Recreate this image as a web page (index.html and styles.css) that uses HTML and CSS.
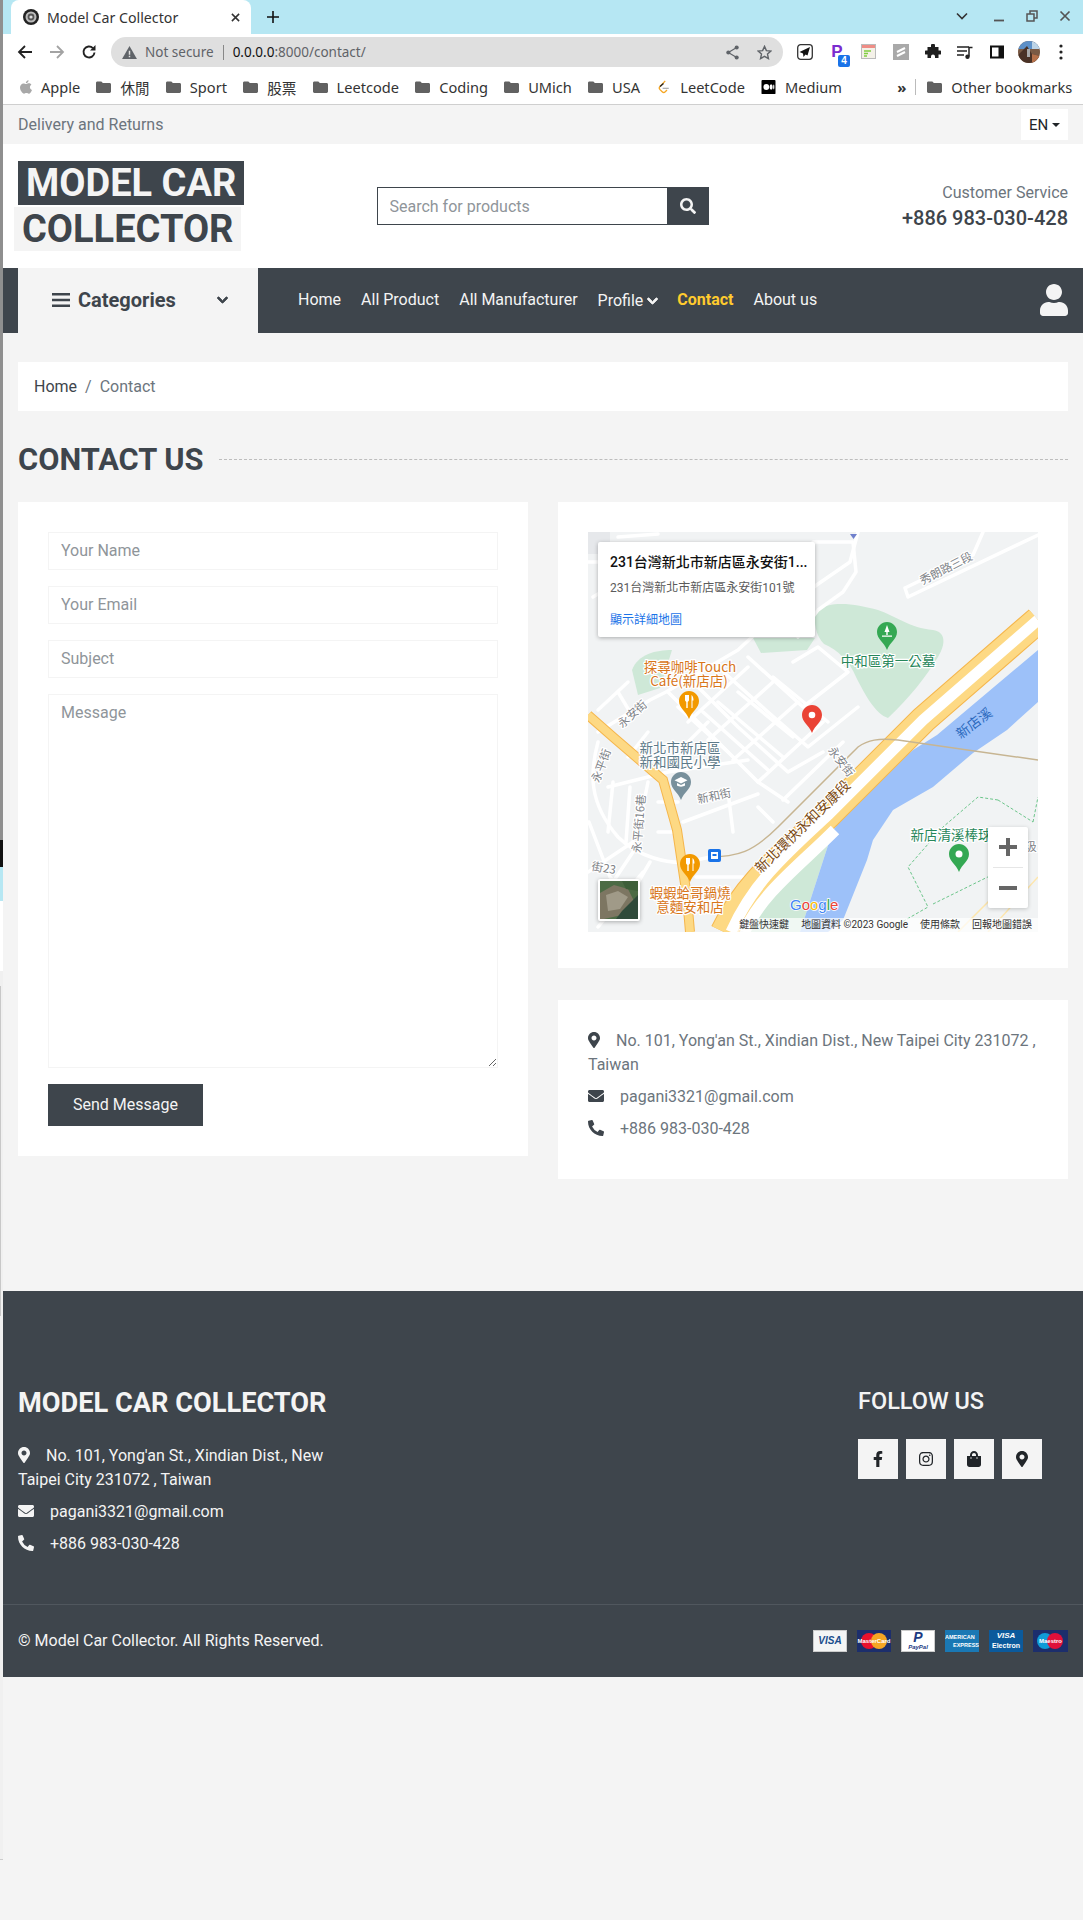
FILE: index.html
```html
<!DOCTYPE html>
<html lang="en">
<head>
<meta charset="utf-8">
<title>Model Car Collector</title>
<link rel="stylesheet" href="styles.css">
</head>
<body>
<svg class="defs" width="0" height="0" aria-hidden="true">
  <symbol id="i-marker" viewBox="0 0 384 512"><path d="M172.268 501.67C26.97 291.031 0 255.457 0 192 0 85.961 85.961 0 192 0s192 85.961 192 192c0 63.457-26.97 99.031-172.268 309.67-9.535 13.774-29.93 13.773-39.464 0zM192 272c44.183 0 80-35.817 80-80s-35.817-80-80-80-80 35.817-80 80 35.817 80 80 80z"/></symbol>
  <symbol id="i-mail" viewBox="0 0 512 512"><path d="M502.3 190.8c3.9-3.1 9.7-.2 9.7 4.7V400c0 26.5-21.5 48-48 48H48c-26.5 0-48-21.5-48-48V195.6c0-5 5.7-7.8 9.7-4.7 22.4 17.4 52.1 39.5 154.1 113.6 21.1 15.4 56.7 47.8 92.2 47.6 35.7.3 72-32.8 92.3-47.6 102-74.1 131.6-96.3 154-113.7zM256 320c23.2.4 56.6-29.2 73.4-41.4 132.7-96.3 142.8-104.7 173.4-128.7 5.8-4.5 9.2-11.5 9.2-18.9v-19c0-26.5-21.5-48-48-48H48C21.5 64 0 85.5 0 112v19c0 7.4 3.4 14.3 9.2 18.9 30.6 23.9 40.7 32.4 173.4 128.7 16.8 12.2 50.2 41.8 73.4 41.4z"/></symbol>
  <symbol id="i-phone" viewBox="0 0 512 512"><path d="M497.39 361.8l-112-48a24 24 0 0 0-28 6.9l-49.6 60.6A370.66 370.66 0 0 1 130.6 204.11l60.6-49.6a23.94 23.94 0 0 0 6.9-28l-48-112A24.16 24.16 0 0 0 122.6.61l-104 24A24 24 0 0 0 0 48c0 256.5 207.9 464 464 464a24 24 0 0 0 23.4-18.6l24-104a24.29 24.29 0 0 0-14.01-27.6z"/></symbol>
  <symbol id="i-search" viewBox="0 0 512 512"><path d="M505 442.7L405.3 343c-4.5-4.5-10.6-7-17-7H372c27.6-35.3 44-79.7 44-128C416 93.1 322.9 0 208 0S0 93.1 0 208s93.1 208 208 208c48.3 0 92.7-16.4 128-44v16.3c0 6.4 2.5 12.5 7 17l99.7 99.7c9.4 9.4 24.6 9.4 33.9 0l28.3-28.3c9.4-9.4 9.4-24.6.1-34zM208 336c-70.7 0-128-57.2-128-128 0-70.7 57.2-128 128-128 70.7 0 128 57.2 128 128 0 70.7-57.2 128-128 128z"/></symbol>
  <symbol id="i-chev" viewBox="0 0 448 512"><path d="M207.029 381.476L12.686 187.132c-9.373-9.373-9.373-24.569 0-33.941l22.667-22.667c9.357-9.357 24.522-9.375 33.901-.04L224 284.505l154.745-154.021c9.379-9.335 24.544-9.317 33.901.04l22.667 22.667c9.373 9.373 9.373 24.569 0 33.941L240.971 381.476c-9.373 9.372-24.569 9.372-33.942 0z"/></symbol>
  <symbol id="i-folder" viewBox="0 0 16 14"><path d="M1.5 1h4.2l1.6 1.7h7.2c.8 0 1.5.7 1.5 1.5v7.6c0 .8-.7 1.5-1.5 1.5h-13C.7 13.3 0 12.6 0 11.8V2.5C0 1.7.7 1 1.5 1z"/></symbol>
</svg>
<div class="screen">
  <div class="edge">
    <div class="edge-a"></div><div class="edge-b"></div><div class="edge-c"></div><div class="edge-d"></div><div class="edge-e"></div><div class="edge-f"></div><div class="edge-g"></div><div class="edge-h"></div><div class="edge-i"></div>
  </div>
  <div class="main">
    <div class="browser">
      <div class="tabstrip">
        <div class="tab">
          <svg class="favicon" viewBox="0 0 16 16"><circle cx="8" cy="8" r="8" fill="#222"/><circle cx="8" cy="8" r="5.5" fill="#bbb"/><circle cx="8" cy="8" r="3.4" fill="#555"/><circle cx="8" cy="8" r="1.6" fill="#ddd"/></svg>
          <span class="tab-title">Model Car Collector</span>
          <svg class="tab-x" viewBox="0 0 10 10"><path d="M1 1l8 8M9 1L1 9" stroke="#333" stroke-width="1.7" fill="none"/></svg>
        </div>
        <svg class="tab-plus" viewBox="0 0 12 12"><path d="M6 0v12M0 6h12" stroke="#111" stroke-width="1.6" fill="none"/></svg>
        <div class="win-controls">
          <svg class="win win-chev" viewBox="0 0 12 12"><path d="M1 3.5l5 5 5-5" stroke="#333" stroke-width="1.6" fill="none"/></svg>
          <svg class="win" viewBox="0 0 12 12"><path d="M1 10.5h10" stroke="#555" stroke-width="1.8" fill="none"/></svg>
          <svg class="win" viewBox="0 0 12 12"><path d="M1 4h7v7H1zM4 3.5V1h7v7H8.5" stroke="#555" stroke-width="1.5" fill="none"/></svg>
          <svg class="win" viewBox="0 0 12 12"><path d="M1.5 1.5l9 9M10.5 1.5l-9 9" stroke="#555" stroke-width="1.7" fill="none"/></svg>
        </div>
      </div>
      <div class="toolbar">
        <svg class="tb" viewBox="0 0 16 16"><path d="M15 8H2M8 2L2 8l6 6" stroke="#222" stroke-width="1.8" fill="none"/></svg>
        <svg class="tb" viewBox="0 0 16 16"><path d="M1 8h13M8 2l6 6-6 6" stroke="#a3a3a3" stroke-width="1.8" fill="none"/></svg>
        <svg class="tb" viewBox="0 0 16 16"><path d="M13.5 8.5a5.5 5.5 0 1 1-1.6-4.4" stroke="#222" stroke-width="1.9" fill="none"/><path d="M14.5 1v5.5H9z" fill="#222"/></svg>
        <div class="omnibox">
          <svg class="warn" viewBox="0 0 16 14"><path d="M8 0l8 14H0z" fill="#5f6368"/><path d="M7.2 5h1.6v4.5H7.2zM7.2 10.5h1.6V12H7.2z" fill="#dfdfdf"/></svg>
          <span class="not-secure">Not secure</span>
          <span class="omni-sep"></span>
          <span class="url"><b class="url-host">0.0.0.0</b>:8000/contact/</span>
          <svg class="omni-share" viewBox="0 0 14 16"><circle cx="2.5" cy="8" r="2.2" fill="#5f6368"/><circle cx="11.5" cy="2.7" r="2.2" fill="#5f6368"/><circle cx="11.5" cy="13.3" r="2.2" fill="#5f6368"/><path d="M2.5 8l9-5.3M2.5 8l9 5.3" stroke="#5f6368" stroke-width="1.3"/></svg>
          <svg class="omni-star" viewBox="0 0 16 16"><path d="M8 1.5l2 4.5 4.8.5-3.6 3.2 1 4.8L8 12.1l-4.2 2.4 1-4.8L1.2 6.5l4.8-.5z" stroke="#5f6368" stroke-width="1.5" fill="none"/></svg>
        </div>
        <div class="exts">
          <svg class="ext" viewBox="0 0 16 16"><rect x=".7" y=".7" width="14.6" height="14.6" rx="3" fill="#fff" stroke="#333" stroke-width="1.3"/><path d="M13 3L2.5 8 6 9.5 6.5 13l2-2.500 2 1z" fill="#111"/></svg>
          <span class="ext ext-p">P<span class="ext-badge">4</span></span>
          <svg class="ext" viewBox="0 0 16 16"><rect x=".5" y=".5" width="14" height="14" fill="#f4f1e8" stroke="#bbb"/><rect x="1" y="1" width="13" height="3" fill="#ef8d86"/><path d="M3 7h7M3 9.5h4M3 12h3" stroke="#7fce3f" stroke-width="1.3"/></svg>
          <svg class="ext" viewBox="0 0 16 16"><rect width="16" height="16" fill="#a9a9a9"/><path d="M4 8l8-4M4 12l8-4" stroke="#fff" stroke-width="2" fill="none"/></svg>
          <svg class="ext" viewBox="0 0 16 16"><path d="M6 1.5a2 2 0 0 1 4 0V3h3.500v3.500H15a2 2 0 0 1 0 4h-1.500V14H10v-1.500a2 2 0 0 0-4 0V14H2.500v-3.500H1a2 2 0 0 1 0-4h1.500V3H6z" fill="#1f1f1f"/></svg>
          <svg class="ext" viewBox="0 0 16 16"><path d="M0 3h12M0 7h10M0 11h7" stroke="#222" stroke-width="1.5" fill="none"/><path d="M12 12.500V3.500h3.500" stroke="#222" stroke-width="1.5" fill="none"/><circle cx="10.500" cy="12.800" r="2.200" fill="#222"/></svg>
          <svg class="ext" viewBox="0 0 16 16"><rect x="1" y="1.500" width="14" height="13" fill="#111"/><rect x="3" y="3.500" width="6.500" height="9" fill="#fff"/></svg>
          <svg class="ext ext-ava" viewBox="0 0 22 22"><defs><clipPath id="ava"><circle cx="11" cy="11" r="11"/></clipPath></defs><g clip-path="url(#ava)"><rect width="22" height="22" fill="#7a5a44"/><rect width="22" height="8" fill="#5d90c8"/><path d="M14 0l8 4v4h-8z" fill="#bcd3e6"/><path d="M0 14l9-9 5 8 8 2v7H0z" fill="#4a3226"/><path d="M14 13l8 2v7h-8z" fill="#b5714a"/><path d="M9 8h3v8H9z" fill="#a9a9a9"/></g></svg>
          <svg class="ext ext-dots" viewBox="0 0 4 16"><circle cx="2" cy="2" r="1.600" fill="#222"/><circle cx="2" cy="8" r="1.600" fill="#222"/><circle cx="2" cy="14" r="1.600" fill="#222"/></svg>
        </div>
      </div>
      <div class="bookmarks">
        <a class="bm"><svg class="bm-i bm-apple" viewBox="0 0 14 16"><path d="M10 0c.2 1.800-1.500 3.600-3.200 3.500C6.600 1.800 8.300.2 10 0zM7 4.600c.8 0 1.800-.9 3.300-.9 1.100 0 2.200.5 3 1.600-2.600 1.500-2.100 5.100.7 6.100-.7 1.900-2.200 4.400-3.700 4.400-1 0-1.500-.7-2.800-.7s-1.800.7-2.800.7C2.900 15.800 0 12 0 8.700c0-3 2-4.900 4-4.900 1.300 0 2.200.8 3 .8z" fill="#a8a8a8"/></svg>Apple</a>
        <a class="bm"><svg class="bm-i"><use href="#i-folder"/></svg>休閒</a>
        <a class="bm"><svg class="bm-i"><use href="#i-folder"/></svg>Sport</a>
        <a class="bm"><svg class="bm-i"><use href="#i-folder"/></svg>股票</a>
        <a class="bm"><svg class="bm-i"><use href="#i-folder"/></svg>Leetcode</a>
        <a class="bm"><svg class="bm-i"><use href="#i-folder"/></svg>Coding</a>
        <a class="bm"><svg class="bm-i"><use href="#i-folder"/></svg>UMich</a>
        <a class="bm"><svg class="bm-i"><use href="#i-folder"/></svg>USA</a>
        <a class="bm"><svg class="bm-i" viewBox="0 0 14 16"><path d="M9 1L3 7.500a2.500 2.500 0 0 0 0 3.500l2.500 2.500a2.500 2.500 0 0 0 3.500 0l2-2" stroke="#f5a623" stroke-width="1.500" fill="none"/><path d="M3 7.500L7 4" stroke="#222" stroke-width="1.500"/><path d="M6 9.500h7" stroke="#aaa" stroke-width="1.400"/></svg>LeetCode</a>
        <a class="bm bm-med"><svg class="bm-i" viewBox="0 0 16 16"><rect width="16" height="16" rx="1" fill="#000"/><circle cx="5.500" cy="8" r="3.300" fill="#fff"/><ellipse cx="11" cy="8" rx="1.700" ry="3.100" fill="#fff"/><ellipse cx="14" cy="8" rx=".7" ry="2.800" fill="#fff"/></svg>Medium</a>
        <span class="bm-more">»</span>
        <span class="bm-sep"></span>
        <a class="bm bm-other"><svg class="bm-i"><use href="#i-folder"/></svg>Other bookmarks</a>
      </div>
    </div>

    <div class="topbar">
      <span class="delivery">Delivery and Returns</span>
      <span class="lang">EN<i class="caret"></i></span>
    </div>

    <header class="header">
      <div class="logo">
        <span class="logo-a">MODEL CAR</span>
        <span class="logo-b">COLLECTOR</span>
      </div>
      <form class="search">
        <input class="search-input" type="text" placeholder="Search for products">
        <span class="search-btn"><svg class="ico-search"><use href="#i-search"/></svg></span>
      </form>
      <div class="service">
        <div class="service-label">Customer Service</div>
        <div class="service-phone">+886 983-030-428</div>
      </div>
    </header>

    <nav class="nav">
      <div class="cats">
        <svg class="cats-bars" viewBox="0 0 18 14"><path d="M0 1.300h18M0 7h18M0 12.700h18" stroke="#3e454c" stroke-width="2.600"/></svg>
        <span class="cats-label">Categories</span>
        <svg class="cats-chev"><use href="#i-chev"/></svg>
      </div>
      <div class="menu">
        <a class="menu-item">Home</a>
        <a class="menu-item">All Product</a>
        <a class="menu-item">All Manufacturer</a>
        <a class="menu-item menu-profile">Profile <svg class="menu-chev"><use href="#i-chev"/></svg></a>
        <a class="menu-item menu-active">Contact</a>
        <a class="menu-item">About us</a>
      </div>
      <svg class="user" viewBox="0 0 448 512"><path d="M224 256c70.700 0 128-57.300 128-128S294.700 0 224 0 96 57.300 96 128s57.300 128 128 128zm89.600 32h-16.700c-22.200 10.200-46.900 16-72.900 16s-50.600-5.800-72.900-16h-16.700C60.200 288 0 348.200 0 422.400V464c0 26.500 21.500 48 48 48h352c26.500 0 48-21.500 48-48v-41.600c0-74.200-60.200-134.400-134.400-134.400z"/></svg>
    </nav>

    <main class="content">
      <div class="crumbs"><a class="crumb-home">Home</a><span class="crumb-sep">/</span><span class="crumb-cur">Contact</span></div>
      <div class="title-row"><h1 class="title">CONTACT US</h1><span class="title-line"></span></div>
      <div class="columns">
        <form class="card form-card">
          <input class="field" type="text" placeholder="Your Name">
          <input class="field" type="email" placeholder="Your Email">
          <input class="field" type="text" placeholder="Subject">
          <textarea class="field field-msg" placeholder="Message"></textarea>
          <button class="send" type="button">Send Message</button>
        </form>
        <div class="col-right">
          <div class="card map-card">
            <div class="map">
              <svg class="map-svg" viewBox="0 0 450 400" width="450" height="400">
                <rect width="450" height="400" fill="#f1f3f4"/>
                <rect width="22" height="22" fill="#e6e8eb"/>
                <!-- parks -->
                <path d="M228 78C245 68 268 72 290 78 308 84 322 96 345 98 358 100 358 112 350 125 338 145 322 165 300 186 288 182 278 165 268 145 262 130 250 118 236 112 228 104 225 90 228 78z" fill="#cee8d7"/>
                <path d="M165 106h62l-8 12-46 3z" fill="#cee8d7"/>
                <path d="M44 138C50 122 68 118 84 118L72 156 50 163z" fill="#cee8d7"/>
                <path d="M245 298L212 400H162C176 360 205 335 245 298z" fill="#cee8d7"/>
                <path d="M350 205L450 122V140L425 165 380 200z" fill="#cee8d7"/>
                <!-- river -->
                <path d="M450 118L349 203 325 218 285 251 245 298 212 400H240L255 388 279 328 285 308 305 278 345 255 385 221 419 198 450 170z" fill="#9dc1f9"/>
                <!-- minor roads -->
                <g class="roads">
                  <path d="M10 200L62 168 78 160 150 118 178 92 195 78 230 52 262 30 270 0"/>
                  <path d="M225 10H265L268 40 255 60 230 78 210 105"/>
                  <path d="M80 160L125 205 170 250 200 270"/>
                  <path d="M105 150L150 195 200 240 235 220"/>
                  <path d="M130 135L180 180 220 215 270 175"/>
                  <path d="M160 125L215 175 260 140 230 115 205 130"/>
                  <path d="M100 190L160 135M120 208L185 150M145 228L210 170M170 250L235 190M195 268L255 210"/>
                  <path d="M130 170L195 225M115 180L180 238M150 160L205 205M185 145L240 190M90 175L140 220"/>
                  <path d="M85 225L120 190M20 255L80 240 160 228M10 210C2 240 0 270 30 305 50 325 80 332 100 330L122 325"/>
                  <path d="M25 250L20 300M42 255L38 310M60 250L50 300M70 270H90M70 300H85"/>
                  <path d="M95 290L170 262M0 340L45 310M15 365L45 320M30 385L62 330M10 395L55 340"/>
                  <path d="M108 345H155M140 260L145 300M170 275L185 290"/>
                  <path d="M0 30H15L30 50 5 65M30 5L70 2M317 56L385 23 395 0M317 56L320 65 450 3"/>
                  <path d="M10 178L40 150M30 160L45 185M60 200L40 225"/>
                  <path d="M1 290L22 345 38 362"/>
                </g>
                <!-- highway left -->
                <path d="M0 183L25 205 75 248 89 298 99 365 102 400" class="hw-edge" stroke-width="10"/>
                <path d="M0 183L25 205 75 248 89 298 99 365 102 400" class="hw-fill" stroke-width="8"/>
                <!-- main highway -->
                <path d="M450 88L335 188 240 283C195 325 160 350 136 400" class="hw-edge" stroke-width="28"/>
                <path d="M450 88L335 188 240 283C195 325 160 350 136 400" class="hw-fill" stroke-width="26"/>
                <path d="M450 88L335 188 240 283C200 320 165 350 143 400" class="hw-white" stroke-width="11"/>
                <path d="M247 298C210 335 175 360 156 400" class="hw-white" stroke-width="12"/>
                <path d="M120 325C150 325 165 320 190 295L270 215C280 208 290 206 310 208L450 228" class="trail"/>
                <path d="M410 268L390 265 355 295 320 335 340 375 300 398M410 268L445 290M445 290L450 265M345 372L420 335" class="green-dash"/>
                <path d="M400 400L450 345M370 400L410 360" class="yellow-thin"/>
                <!-- road labels -->
                <text class="lbl-road" transform="translate(360 40) rotate(-27)">秀朗路三段</text>
                <text class="lbl-road" transform="translate(47 185) rotate(-42)">永安街</text>
                <text class="lbl-road" transform="translate(17 235) rotate(-70)">永平街</text>
                <text class="lbl-road" transform="translate(250 232) rotate(52)">永安街</text>
                <text class="lbl-road" transform="translate(127 268) rotate(-12)">新和街</text>
                <text class="lbl-road" transform="translate(55 292) rotate(-85)">永平街16巷</text>
                <text class="lbl-road" transform="translate(15 340) rotate(10)">街23</text>
                <text class="lbl-hw" transform="translate(218 298) rotate(-44)">新北環快永和安康段</text>
                <text class="lbl-river" transform="translate(389 195) rotate(-37)">新店溪</text>
                <text class="lbl-green" x="300" y="134">中和區第一公墓</text>
                <text class="lbl-orange" x="102" y="140">探尋咖啡Touch</text>
                <text class="lbl-orange" x="101" y="154">Café(新店店)</text>
                <text class="lbl-school" x="92" y="221">新北市新店區</text>
                <text class="lbl-school" x="92" y="235">新和國民小學</text>
                <text class="lbl-orange" x="102" y="366">蝦蝦蛤哥鍋燒</text>
                <text class="lbl-orange" x="102" y="380">意麵安和店</text>
                <text class="lbl-green" x="363" y="308">新店清溪棒球</text>
                <text class="lbl-road" x="443" y="319">汲</text>
                <!-- pins -->
                <g transform="translate(214 173)"><path d="M10 0C4.500 0 0 4.500 0 10c0 7 7 10 10 18 3-8 10-11 10-18C20 4.500 15.500 0 10 0z" fill="#ea4335"/><circle cx="10" cy="10" r="3.300" fill="#fff"/></g>
                <g transform="translate(91 159)"><path d="M10 0C4.500 0 0 4.500 0 10c0 7 7 10 10 18 3-8 10-11 10-18C20 4.500 15.500 0 10 0z" fill="#f29900"/><path d="M6 4v5c0 1 1 1.500 1.300 2v6h1.400v-6c.3-.5 1.300-1 1.300-2V4M12.500 4c1.500 1 2 3 2 5.500h-1V17h-1z" fill="#fff"/></g>
                <g transform="translate(92 322)"><path d="M10 0C4.500 0 0 4.500 0 10c0 7 7 10 10 18 3-8 10-11 10-18C20 4.500 15.500 0 10 0z" fill="#f29900"/><path d="M6 4v5c0 1 1 1.500 1.300 2v6h1.400v-6c.3-.5 1.300-1 1.300-2V4M12.500 4c1.500 1 2 3 2 5.500h-1V17h-1z" fill="#fff"/></g>
                <g transform="translate(289 90)"><path d="M10 0C4.500 0 0 4.500 0 10c0 7 7 10 10 18 3-8 10-11 10-18C20 4.500 15.500 0 10 0z" fill="#34a853"/><path d="M10 3l2.500 7h-5zM9.300 10h1.400v3H9.300zM5 13.500h10v1.300H5z" fill="#fff"/></g>
                <g transform="translate(361 312)"><path d="M10 0C4.500 0 0 4.500 0 10c0 7 7 10 10 18 3-8 10-11 10-18C20 4.500 15.500 0 10 0z" fill="#34a853"/><circle cx="10" cy="10" r="3.500" fill="#fff"/></g>
                <g transform="translate(83 240)"><path d="M10 0C4.500 0 0 4.500 0 10c0 7 7 10 10 18 3-8 10-11 10-18C20 4.500 15.500 0 10 0z" fill="#78909c"/><path d="M10 5l6.500 3.300L10 11.500 3.500 8.300zM6 11v2.500c2 1.500 6 1.500 8 0V11l-4 2z" fill="#fff"/></g>
                <rect x="120" y="317" width="13" height="13" rx="2" fill="#1a73e8"/>
                <rect x="123" y="320" width="7" height="7" fill="#fff"/>
                <rect x="124.500" y="322" width="4" height="2" fill="#1a73e8"/>
                <path d="M262 2h7l-3.500 5z" fill="#6f80cc"/>
                <text class="google" x="202" y="378"><tspan fill="#4285f4">G</tspan><tspan fill="#ea4335">o</tspan><tspan fill="#fbbc05">o</tspan><tspan fill="#4285f4">g</tspan><tspan fill="#34a853">l</tspan><tspan fill="#ea4335">e</tspan></text>
              </svg>
              <div class="iw">
                <div class="iw-title">231台灣新北市新店區永安街1...</div>
                <div class="iw-addr">231台灣新北市新店區永安街101號</div>
                <div class="iw-link">顯示詳細地圖</div>
              </div>
              <div class="sat"><svg class="sat-img" viewBox="0 0 38 38"><rect width="38" height="38" fill="#4c6b45"/><path d="M0 12L14 4l14 4 6 12-12 14-18 4H0z" fill="#7d7662"/><path d="M6 14l12-4 10 6-8 12-12 2z" fill="#a09a88"/><path d="M38 14L22 30 16 38h22z" fill="#2f4a3a"/><path d="M22 0h16v10l-12-2z" fill="#3e5f3a"/></svg></div>
              <div class="zoomctl">
                <div class="zoom-btn"><svg class="zoom-i" viewBox="0 0 18 18"><path d="M9 0v18M0 9h18" stroke="#666" stroke-width="4"/></svg></div>
                <div class="zoom-sep"></div>
                <div class="zoom-btn"><svg class="zoom-i" viewBox="0 0 18 18"><path d="M0 9h18" stroke="#666" stroke-width="4"/></svg></div>
              </div>
              <div class="attrib"><span class="attrib-k">鍵盤快速鍵</span><span class="attrib-k">地圖資料 ©2023 Google</span><span class="attrib-k">使用條款</span><span class="attrib-k">回報地圖錯誤</span></div>
            </div>
          </div>
          <div class="card info-card">
            <p class="info-line"><svg class="ic ic-marker"><use href="#i-marker"/></svg>No. 101, Yong'an St., Xindian Dist., New Taipei City 231072 , Taiwan</p>
            <p class="info-line"><svg class="ic ic-wide"><use href="#i-mail"/></svg>pagani3321@gmail.com</p>
            <p class="info-line"><svg class="ic ic-wide"><use href="#i-phone"/></svg>+886 983-030-428</p>
          </div>
        </div>
      </div>
    </main>

    <footer class="footer">
      <div class="footer-top">
        <div class="f-about">
          <h2 class="f-title">MODEL CAR COLLECTOR</h2>
          <p class="info-line f-line"><svg class="ic ic-marker"><use href="#i-marker"/></svg>No. 101, Yong'an St., Xindian Dist., New Taipei City 231072 , Taiwan</p>
          <p class="info-line f-line"><svg class="ic ic-wide"><use href="#i-mail"/></svg>pagani3321@gmail.com</p>
          <p class="info-line f-line"><svg class="ic ic-wide"><use href="#i-phone"/></svg>+886 983-030-428</p>
        </div>
        <div class="f-follow">
          <h3 class="f-follow-title">FOLLOW US</h3>
          <div class="socials">
            <a class="social"><svg class="soc-i" viewBox="0 0 320 512"><path d="M279.14 288l14.22-92.66h-88.91v-60.13c0-25.35 12.42-50.06 52.24-50.06h40.42V6.26S260.43 0 225.36 0c-73.22 0-121.08 44.38-121.08 124.72v70.62H22.89V288h81.39v224h100.17V288z"/></svg></a>
            <a class="social"><svg class="soc-i" viewBox="0 0 448 512"><path d="M224.1 141c-63.6 0-114.9 51.3-114.9 114.9s51.3 114.9 114.9 114.9S339 319.5 339 255.9 287.7 141 224.1 141zm0 189.6c-41.1 0-74.7-33.5-74.7-74.7s33.5-74.7 74.7-74.7 74.7 33.5 74.7 74.7-33.6 74.7-74.7 74.7zm146.4-194.3c0 14.9-12 26.8-26.8 26.8-14.9 0-26.8-12-26.8-26.8s12-26.8 26.8-26.8 26.8 12 26.8 26.8zm76.1 27.2c-1.7-35.9-9.9-67.7-36.2-93.9-26.2-26.2-58-34.4-93.9-36.2-37-2.1-147.9-2.1-184.9 0-35.8 1.7-67.6 9.9-93.9 36.1s-34.4 58-36.2 93.9c-2.1 37-2.1 147.9 0 184.9 1.7 35.9 9.9 67.7 36.2 93.9s58 34.4 93.9 36.2c37 2.1 147.9 2.1 184.9 0 35.9-1.7 67.7-9.9 93.9-36.2 26.2-26.2 34.4-58 36.2-93.9 2.1-37 2.1-147.8 0-184.8zM398.8 388c-7.8 19.6-22.9 34.7-42.6 42.6-29.5 11.7-99.5 9-132.1 9s-102.7 2.6-132.1-9c-19.6-7.8-34.7-22.9-42.6-42.6-11.7-29.5-9-99.5-9-132.1s-2.6-102.7 9-132.1c7.8-19.6 22.9-34.7 42.6-42.6 29.5-11.7 99.5-9 132.1-9s102.7-2.6 132.1 9c19.6 7.8 34.7 22.9 42.6 42.6 11.7 29.5 9 99.5 9 132.1s2.7 102.7-9 132.1z"/></svg></a>
            <a class="social"><svg class="soc-i" viewBox="0 0 448 512"><path d="M352 160v-32C352 57.42 294.579 0 224 0 153.42 0 96 57.42 96 128v32H0v272c0 44.183 35.817 80 80 80h288c44.183 0 80-35.817 80-80V160h-96zm-192-32c0-35.29 28.71-64 64-64s64 28.71 64 64v32H160v-32zm160 120c-13.255 0-24-10.745-24-24s10.745-24 24-24 24 10.745 24 24-10.745 24-24 24zm-192 0c-13.255 0-24-10.745-24-24s10.745-24 24-24 24 10.745 24 24-10.745 24-24 24z"/></svg></a>
            <a class="social"><svg class="soc-i"><use href="#i-marker"/></svg></a>
          </div>
        </div>
      </div>
      <div class="footer-bottom">
        <span class="copyright">© Model Car Collector. All Rights Reserved.</span>
        <div class="pays">
          <span class="pay pay-visa">VISA</span>
          <span class="pay pay-mc"><i class="mc-a"></i><i class="mc-b"></i><em class="pay-over">MasterCard</em></span>
          <span class="pay pay-paypal"><b class="pp-p">P</b><em class="pp-t">PayPal</em></span>
          <span class="pay pay-amex"><em class="amex-a">AMERICAN</em><em class="amex-b">EXPRESS</em></span>
          <span class="pay pay-elec"><b class="el-a">VISA</b><em class="el-b">Electron</em></span>
          <span class="pay pay-mc pay-mae"><i class="mc-a"></i><i class="mc-b"></i><em class="pay-over">Maestro</em></span>
        </div>
      </div>
    </footer>
  </div>
</div>
</body>
</html>
```

FILE: styles.css
```css
* { box-sizing: border-box; }
html, body { margin: 0; padding: 0; }
body { width: 1083px; height: 1920px; overflow: hidden; background: #f4f4f4; font-family: Roboto, "Noto Sans CJK TC", sans-serif; font-size: 16px; color: #3e454c; }
.defs { position: absolute; }
.screen { display: flex; height: 1920px; }
.edge { width: 3px; flex: none; display: flex; flex-direction: column; }
.edge-a { height: 840px; background: #8f8f8f; }
.edge-b { height: 27px; background: #111; }
.edge-c { height: 34px; background: #b6e7f3; }
.edge-d { height: 70px; background: #fff; }
.edge-e { height: 15px; background: #f0f0f0; }
.edge-f { height: 330px; background: linear-gradient(90deg, #c8c8c8 1px, #f0f0f0 1px); }
.edge-g { height: 543px; background: #f0f0f0; }
.edge-h { height: 1px; background: #ccc; }
.edge-i { flex: 1; background: #f4f4f4; }
.main { width: 1080px; flex: none; display: flex; flex-direction: column; }

/* browser chrome */
.browser { font-family: "Noto Sans", "Noto Sans CJK TC", sans-serif; color: #333; height: 105px; background: #fff; border-bottom: 1px solid #cfcfcf; }
.tabstrip { height: 34px; background: #b6e7f3; display: flex; align-items: flex-end; padding-left: 8px; }
.tab { width: 240px; height: 34px; background: #fff; border-radius: 8px 8px 0 0; display: flex; align-items: center; padding: 0 11px 0 12px; }
.favicon { width: 16px; height: 16px; margin-right: 8px; flex: none; }
.tab-title { font-size: 14.2px; flex: 1; white-space: nowrap; }
.tab-x { width: 9px; height: 9px; }
.tab-plus { width: 12px; height: 12px; margin: 0 0 11px 16px; }
.win-controls { margin-left: auto; display: flex; gap: 21px; padding: 0 12px 12px 0; }
.win { width: 12px; height: 12px; }
.win-chev { margin-right: 4px; }
.toolbar { height: 36px; display: flex; align-items: center; padding-left: 14px; }
.tb { width: 16px; height: 16px; margin-right: 16px; flex: none; }
.omnibox { width: 672px; height: 30px; margin-left: -2px; background: #dfdfdf; border-radius: 15px; display: flex; align-items: center; padding-left: 11px; font-size: 13.5px; }
.warn { width: 15px; height: 13px; flex: none; margin-right: 8px; }
.not-secure { color: #5f6368; white-space: nowrap; }
.omni-sep { width: 1px; height: 15px; background: #888; margin: 0 9px; }
.url { color: #5f6368; }
.url-host { font-weight: 400; color: #111; }
.omni-share { width: 13px; height: 15px; margin-left: auto; }
.omni-star { width: 15px; height: 15px; margin: 0 11px 0 18px; }
.exts { display: flex; align-items: center; margin-left: 14px; gap: 16px; }
.ext { width: 16px; height: 16px; flex: none; display: block; position: relative; }
.ext-p { font: 700 17px/16px "Liberation Sans", sans-serif; color: #7a2ccf; text-align: center; }
.ext-badge { position: absolute; right: -5px; bottom: -7px; width: 12px; height: 12px; background: #1a73e8; color: #fff; font: 700 10px/12px "Liberation Sans", sans-serif; border-radius: 2px; }
.ext-ava { width: 22px; height: 22px; margin: 0 -3px; }
.ext-dots { width: 4px; margin-left: 6px; }
.bookmarks { height: 34px; display: flex; align-items: center; padding-left: 17px; font-size: 14.6px; }
.bm { display: flex; align-items: center; gap: 9px; margin-right: 16.2px; white-space: nowrap; }
.bm-i { width: 15px; height: 14px; fill: #616161; flex: none; }
.bm-apple { width: 12px; }
.bm-more { margin-left: 39px; font-size: 15px; font-weight: 700; }
.bm-sep { width: 1px; height: 16px; background: #bbb; margin: 0 11px 0 9px; }
.bm-other { margin: 0; }

/* top bar */
.topbar { height: 39px; padding: 4px 15px; display: flex; align-items: center; justify-content: space-between; }
.delivery { font-size: 16px; color: #6c757d; }
.lang { width: 47px; height: 31px; background: #fff; color: #212529; font-size: 15px; display: flex; align-items: center; justify-content: center; }
.caret { width: 0; height: 0; margin-left: 4px; border: 4px solid transparent; border-top-color: #212529; border-bottom: 0; }

/* header */
.header { height: 124px; background: #fff; padding: 0 15px; display: grid; grid-template-columns: 1fr 331px 1fr; align-items: center; }
.logo { display: flex; flex-direction: column; align-items: flex-start; font-size: 38px; font-weight: 700; line-height: 44px; margin-top: -1px; }
.logo-a { background: #3e454c; color: #f4f4f4; padding: 0 8px 0 8px; white-space: nowrap; }
.logo-b { background: #f4f4f4; color: #3e454c; padding: 0 8px; margin: 2px 0 0 -4px; white-space: nowrap; }
.search { display: flex; height: 38px; margin-left: -1px; }
.search-input { flex: 1; min-width: 0; border: 1px solid #3e454c; border-right: 0; padding: 0 12px; font: 16px Roboto, sans-serif; background: #fff; outline: 0; }
.search-input::placeholder { color: #8f959a; opacity: 1; }
.search-btn { width: 42px; background: #3e454c; display: flex; align-items: center; justify-content: center; }
.ico-search { width: 16px; height: 16px; fill: #f4f4f4; }
.service { text-align: right; justify-self: end; margin-top: 0; }
.service-label { font-size: 16px; color: #6c757d; line-height: 24px; }
.service-phone { font-size: 20px; font-weight: 500; color: #3e454c; line-height: 26px; white-space: nowrap; }

/* nav */
.nav { height: 65px; background: #3e454c; padding: 0 15px; display: flex; align-items: center; }
.cats { width: 240px; height: 65px; background: #f4f4f4; display: flex; align-items: center; padding: 0 0 2px 34px; flex: none; }
.cats-bars { width: 18px; height: 14px; margin-right: 8px; }
.cats-label { font-size: 20px; font-weight: 700; }
.cats-chev { width: 11px; height: 12px; margin-left: 41px; fill: #3e454c; stroke: #3e454c; stroke-width: 40; }
.menu { display: flex; margin-left: 30px; flex: 1; padding-bottom: 2px; }
.menu-item { color: #f4f4f4; font-size: 16px; padding: 0 10px; white-space: nowrap; display: flex; align-items: center; }
.menu-profile { white-space: pre; padding-top: 2px; padding-right: 9px; }
.menu-chev { width: 11px; height: 12px; fill: #f4f4f4; stroke: #f4f4f4; stroke-width: 40; }
.menu-active { color: #ffcb2e; font-weight: 700; }
.user { width: 28px; height: 32px; fill: #f4f4f4; margin-top: -2px; }

/* content */
.content { padding: 29px 15px 0; height: 958px; }
.crumbs { height: 49px; background: #fff; padding: 0 16px; display: flex; align-items: center; }
.crumb-home { color: #3e454c; }
.crumb-sep { color: #6c757d; margin: 0 8px; }
.crumb-cur { color: #6c757d; }
.title-row { height: 91px; display: flex; align-items: center; gap: 15px; padding-top: 5px; }
.title { margin: 0; font-size: 30.8px; font-weight: 700; color: #3e454c; white-space: nowrap; }
.title-line { flex: 1; border-top: 1px dashed #bdbdbd; }
.columns { display: flex; gap: 30px; align-items: flex-start; }
.card { background: #fff; padding: 30px; }
.form-card { width: 510px; display: flex; flex-direction: column; gap: 16px; }
.field { width: 450px; height: 38px; border: 1px solid #f4f4f4; background: #fff; padding: 0 12px 1px; font: 16px Roboto, sans-serif; color: #495057; outline: 0; }
.field::placeholder { color: #8f959a; opacity: 1; }
.field-msg { height: 374px; padding: 8px 12px; display: block; }
.send { width: 155px; height: 42px; padding: 0 0 2px; background: #3e454c; color: #f4f4f4; border: 0; font: 16px Roboto, sans-serif; }
.col-right { width: 510px; display: flex; flex-direction: column; gap: 32px; }
.map-card { padding-bottom: 36px; }
.map { position: relative; width: 450px; height: 400px; overflow: hidden; }
.map-svg { display: block; font-family: "Noto Sans CJK TC", sans-serif; }
.roads { fill: none; stroke: #fff; stroke-width: 3.5; stroke-linejoin: round; stroke-linecap: round; }
.hw-edge { fill: none; stroke: #f5b64c; }
.hw-fill { fill: none; stroke: #fdd984; }
.hw-white { fill: none; stroke: #fff; }
.trail { fill: none; stroke: #c7b592; stroke-width: 1.5; }
.green-dash { fill: none; stroke: #6cc58a; stroke-width: 1; stroke-dasharray: 3 2; }
.yellow-thin { fill: none; stroke: #fde6ad; stroke-width: 1.5; }
.lbl-road, .lbl-hw, .lbl-river, .lbl-green, .lbl-orange, .lbl-school { text-anchor: middle; paint-order: stroke; stroke: #fff; stroke-width: 2.5px; stroke-linejoin: round; }
.lbl-road { font-size: 11.5px; fill: #7f8489; }
.lbl-hw { font-size: 14px; fill: #7b4a12; stroke: #fff; }
.lbl-river { font-size: 13.5px; fill: #2b69bd; stroke: #9dc1f9; }
.lbl-green { font-size: 13.5px; fill: #27875a; }
.lbl-orange { font-size: 13.5px; fill: #d8761a; }
.lbl-school { font-size: 13.5px; fill: #5d7a89; }
.google { font-family: "Liberation Sans", sans-serif; font-size: 15px; paint-order: stroke; stroke: #fff; stroke-width: 1.5px; }
.iw { position: absolute; left: 10px; top: 10px; width: 217px; height: 95px; background: #fff; border-radius: 2px; box-shadow: 0 1px 4px rgba(0,0,0,.3); padding: 10px 6px 9px 12px; font-family: Roboto, "Noto Sans CJK TC", sans-serif; }
.iw-title { font-size: 14px; font-weight: 500; color: #111; line-height: 20px; white-space: nowrap; }
.iw-addr { font-size: 12px; color: #5b5b5b; line-height: 18px; margin-top: 7px; white-space: nowrap; }
.iw-link { font-size: 12px; color: #1a73e8; line-height: 18px; margin-top: 14px; }
.sat { position: absolute; left: 10px; top: 347px; width: 42px; height: 42px; background: #fff; border-radius: 2px; padding: 2px; box-shadow: 0 1px 4px rgba(0,0,0,.3); }
.sat-img { width: 38px; height: 38px; display: block; }
.zoomctl { position: absolute; left: 400px; top: 295px; width: 40px; height: 81px; background: #fff; border-radius: 2px; box-shadow: 0 1px 4px rgba(0,0,0,.2); display: flex; flex-direction: column; align-items: center; }
.zoom-btn { height: 40px; display: flex; align-items: center; justify-content: center; }
.zoom-i { width: 18px; height: 18px; display: block; }
.zoom-sep { width: 30px; height: 1px; background: #e6e6e6; }
.attrib { position: absolute; right: 0; bottom: 0; height: 14px; display: flex; font-size: 10px; line-height: 14px; color: #333; background: rgba(255,255,255,.7); font-family: Roboto, "Noto Sans CJK TC", sans-serif; }
.attrib-k { padding: 0 6px; white-space: nowrap; }
.info-card { height: 179px; padding: 29px 30px; }
.info-line { margin: 0 0 8px; line-height: 24px; color: #6c757d; font-size: 16px; }
.ic { display: inline-block; height: 16px; vertical-align: -2px; fill: #3e454c; }
.ic-marker { width: 12px; margin-right: 16px; }
.ic-wide { width: 16px; margin-right: 16px; }

/* footer */
.footer { height: 386px; background: #3e454c; color: #f4f4f4; display: flex; flex-direction: column; }
.footer-top { height: 314px; border-bottom: 1px solid #50575e; padding: 93px 15px 0; display: flex; justify-content: space-between; }
.f-about { width: 330px; }
.f-title { margin: 0 0 21px; font-size: 27.2px; font-weight: 700; line-height: 39px; white-space: nowrap; color: #f4f4f4; }
.f-line { color: #f4f4f4; }
.f-line .ic { fill: #f4f4f4; }
.f-follow { width: 210px; }
.f-follow-title { margin: 0 0 21px; padding-top: 1px; font-size: 23.5px; font-weight: 500; line-height: 33px; color: #f4f4f4; white-space: nowrap; }
.socials { display: flex; gap: 8px; }
.social { width: 40px; height: 40px; background: #f4f4f4; display: flex; align-items: center; justify-content: center; }
.soc-i { width: 14px; height: 16px; fill: #212529; }
.footer-bottom { flex: 1; padding: 0 15px; display: flex; align-items: center; justify-content: space-between; }
.copyright { font-size: 16px; color: #f4f4f4; margin-bottom: 2px; }
.pays { display: flex; gap: 10px; }
.pay { position: relative; width: 34px; height: 22px; display: block; overflow: hidden; font-family: "Liberation Sans", sans-serif; text-align: center; font-style: normal; }
.pay-visa { background: #f4f5f5; border: 1px solid #ccc; color: #1a4d8c; font-weight: 700; font-style: italic; font-size: 10px; line-height: 20px; }
.pay-mc { background: #1c2e6c; }
.mc-a, .mc-b { position: absolute; top: 3px; width: 16px; height: 16px; border-radius: 50%; }
.mc-a { left: 4px; background: #e8112d; }
.mc-b { left: 14px; background: #f5a623; }
.pay-over { position: absolute; left: 0; right: 0; top: 7px; font-size: 6px; line-height: 8px; font-style: normal; font-weight: 700; color: #fff; }
.pay-mae { width: 35px; }
.pay-mae .mc-a { background: #0f9bd7; }
.pay-mae .mc-b { background: #e0103a; }
.pay-paypal { background: #fff; border: 1px solid #ccc; color: #1c3a82; }
.pp-p { display: block; font-size: 14px; line-height: 13px; font-style: italic; }
.pp-t { display: block; font-size: 6px; line-height: 7px; font-weight: 700; font-style: italic; }
.pay-amex { background: #1a78b4; color: #fff; font-size: 5.5px; font-weight: 700; }
.amex-a { display: block; font-style: normal; line-height: 8px; margin-top: 3px; text-align: left; }
.amex-b { display: block; font-style: normal; line-height: 8px; text-align: right; }
.pay-elec { background: #0b5a9c; color: #fff; }
.el-a { display: block; font-size: 8px; line-height: 10px; font-style: italic; margin-top: 1px; }
.el-b { display: block; font-size: 7px; line-height: 10px; font-style: normal; font-weight: 700; }
```
